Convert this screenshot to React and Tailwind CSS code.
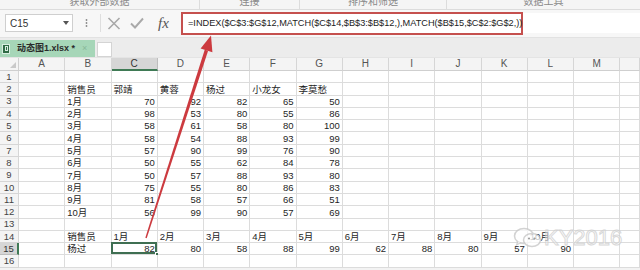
import React from "react";

const COLS = ["A","B","C","D","E","F","G","H","I","J","K","L","M",""];

const DATA = {
  2: ["", "销售员", "郭靖", "黄蓉", "杨过", "小龙女", "李莫愁"],
  3: ["", "1月", 70, 92, 82, 65, 50],
  4: ["", "2月", 98, 53, 80, 55, 86],
  5: ["", "3月", 58, 61, 58, 80, 100],
  6: ["", "4月", 58, 54, 88, 93, 99],
  7: ["", "5月", 57, 90, 99, 76, 90],
  8: ["", "6月", 50, 55, 62, 84, 78],
  9: ["", "7月", 50, 57, 88, 93, 80],
  10: ["", "8月", 75, 55, 80, 86, 83],
  11: ["", "9月", 81, 58, 57, 66, 51],
  12: ["", "10月", 56, 99, 90, 57, 69],
  14: ["", "销售员", "1月", "2月", "3月", "4月", "5月", "6月", "7月", "8月", "9月", "10月"],
  15: ["", "杨过", 82, 80, 58, 88, 99, 62, 88, 80, 57, 90],
};

const font = { fontFamily: '"Liberation Sans", "Noto Sans CJK SC", sans-serif' };

function Cell({ v, selected }) {
  const isNum = typeof v === "number";
  return (
    <div
      className={`relative h-[12.3px] border-r border-b border-[#dcdcdc] bg-white flex items-end overflow-visible whitespace-nowrap px-[2px] text-[9.5px] leading-[11px] text-[#1e1e1e] ${isNum ? "justify-end" : "justify-start"}`}
    >
      {v !== undefined && v !== "" ? <span>{v}</span> : null}
      {selected ? (
        <>
          <div className="absolute -left-[1px] -top-[1px] -right-[0px] -bottom-[0px] border-2 border-[#3f6f52]" />
          <div className="absolute -right-[2px] -bottom-[2px] w-[4px] h-[4px] bg-[#3f6f52] border border-white" />
        </>
      ) : null}
    </div>
  );
}

export default function App() {
  const rowNums = Array.from({ length: 16 }, (_, i) => i + 1);
  return (
    <div className="relative w-[640px] h-[270px] overflow-hidden bg-[#f3f3f3]" style={font}>
      {/* ribbon group labels */}
      <div className="h-[10px] flex border-b border-[#dcdcdc] bg-[#f5f5f5] overflow-hidden text-[10px] text-[#8a8a8a]">
        <div className="w-[200px] flex justify-center border-r border-[#dcdcdc]"><span className="-mt-[6px]">获取外部数据</span></div>
        <div className="w-[100px] flex justify-center border-r border-[#dcdcdc]"><span className="-mt-[6px]">连接</span></div>
        <div className="w-[147px] flex justify-center border-r border-[#dcdcdc]"><span className="-mt-[6px]">排序和筛选</span></div>
        <div className="flex-1 flex justify-center"><span className="-mt-[6px]">数据工具</span></div>
      </div>

      {/* formula bar */}
      <div className="h-[28px] flex items-start bg-[#f7f7f7] border-b border-[#e2e2e2]">
        <div className="ml-[5px] mt-[4px] w-[68px] h-[18px] bg-white border border-[#cfcfcf] flex items-center justify-between pl-[4px] pr-[3px]">
          <span className="text-[10px] text-[#333]">C15</span>
          <svg width="6" height="4" viewBox="0 0 6 4"><path d="M0 0 L6 0 L3 4 Z" fill="#555" /></svg>
        </div>
        <div className="w-[27px] h-[26px] flex items-center justify-center text-[#777]">
          <svg width="3" height="10" viewBox="0 0 3 10"><circle cx="1.5" cy="2" r="0.9" fill="#888"/><circle cx="1.5" cy="5" r="0.9" fill="#888"/><circle cx="1.5" cy="8" r="0.9" fill="#888"/></svg>
        </div>
        <div className="mt-[4px] w-[76px] h-[18px] border-l border-[#dedede] flex items-center">
          <svg className="ml-[6px]" width="14" height="13" viewBox="0 0 14 13"><path d="M1.5 1 L12.5 12 M12.5 1 L1.5 12" stroke="#a9a9a9" strokeWidth="1.6" fill="none"/></svg>
          <svg className="ml-[9px]" width="14" height="12" viewBox="0 0 14 12"><path d="M1 6.5 L5 10.5 L13 1.5" stroke="#a9a9a9" strokeWidth="1.9" fill="none"/></svg>
          <span className="ml-[14px] text-[15px] italic text-[#555] leading-none" style={{ fontFamily: '"Liberation Serif", serif' }}>fx</span>
        </div>
        <div className="ml-[5px] mt-[2px] w-[342px] h-[23px] border-2 border-[#c5504e] bg-white flex items-center pl-[5px] text-[9.2px] text-[#222] whitespace-nowrap">
          =INDEX($C$3:$G$12,MATCH($C$14,$B$3:$B$12,),MATCH($B$15,$C$2:$G$2,))
        </div>
        <div className="flex-1 mt-[3px] h-[20px] bg-white" />
      </div>

      {/* workbook tab row */}
      <div className="h-[19px] flex items-end bg-[#ececec]">
        <div className="w-[95px] h-[17px] bg-[#a6d6b8] flex items-center pl-[2px] whitespace-nowrap">
          <div className="shrink-0 w-[8px] h-[10px] bg-[#2f6b45] border border-[#d8eee0] flex items-center justify-center">
            <div className="w-[3px] h-[5px] border border-[#d8eee0]" />
          </div>
          <span className="ml-[7px] text-[9px] font-bold text-[#2a2a2a]">动态图1.xlsx *</span>
          <span className="ml-[7px] text-[9px] text-[#88b898]">×</span>
        </div>
        <div className="ml-[2px] w-[15px] h-[15px] bg-white border border-[#d4d4d4]" />
      </div>

      <div className="h-[1px] bg-[#e4e4e4]" />

      {/* grid */}
      <div className="grid grid-cols-[19px_repeat(13,46.25px)_20px]">
        {/* header */}
        <div className="h-[13px] border-r border-b border-[#cfcfcf] bg-[#f4f4f4] relative">
          <svg className="absolute right-[2px] bottom-[2px]" width="6" height="6" viewBox="0 0 6 6"><path d="M6 0 L6 6 L0 6 Z" fill="#c9c9c9"/></svg>
        </div>
        {COLS.map((c, i) => (
          <div
            key={"h" + i}
            className={`h-[13px] border-r flex items-center justify-center text-[10px] leading-none ${c === "C" ? "bg-[#d6d6d6] border-[#bdbdbd] border-b-2 border-b-[#3f7a55] text-[#333]" : "bg-[#f4f4f4] border-[#d6d6d6] border-b border-b-[#cfcfcf] text-[#555]"}`}
          >
            {c}
          </div>
        ))}
        {rowNums.map((r) => {
          const d = DATA[r] || [];
          return (
            <React.Fragment key={r}>
              <div
                className={`h-[12.3px] flex items-center justify-center text-[9.5px] leading-none border-b ${r === 15 ? "bg-[#d6d6d6] border-r-2 border-r-[#3f7a55] border-b-[#bdbdbd] text-[#333]" : "bg-[#f4f4f4] border-r border-[#d6d6d6] text-[#444]"}`}
              >
                {r}
              </div>
              {COLS.map((c, ci) => (
                <Cell key={c + ci} v={d[ci]} selected={r === 15 && ci === 2} />
              ))}
            </React.Fragment>
          );
        })}
      </div>

      {/* watermark */}
      <div className="absolute left-[513px] top-[226px] flex items-center opacity-80">
        <svg width="30" height="24" viewBox="0 0 30 24">
          <ellipse cx="11" cy="10" rx="9.5" ry="7.5" fill="rgba(255,255,255,0.85)" stroke="#c9c9c9" strokeWidth="1.5" />
          <ellipse cx="19" cy="14" rx="8.5" ry="6.5" fill="rgba(255,255,255,0.9)" stroke="#c9c9c9" strokeWidth="1.5" />
          <circle cx="16" cy="12.5" r="1.1" fill="#888" />
          <circle cx="21.5" cy="12.5" r="1.1" fill="#888" />
          <path d="M5 15 L3.5 19 L8 16.5" fill="rgba(255,255,255,0.85)" stroke="#c9c9c9" strokeWidth="1.2" />
        </svg>
        <span
          className="ml-[1px] text-[22px] leading-none text-[rgba(255,255,255,0.6)] [-webkit-text-stroke:1px_#cfcfcf]"
          style={{ fontFamily: '"Liberation Sans", sans-serif' }}
        >
          KY2016
        </span>
      </div>

      {/* red arrow */}
      <svg className="absolute left-0 top-0 pointer-events-none" width="640" height="270" viewBox="0 0 640 270">
        <polygon
          points="145.3,237.8 146.7,238.2 208.1,50.8 204.7,49.8"
          fill="#cc3a3f"
        />
        <polygon points="211,35.5 212.4,52.2 200.6,48.6" fill="#cc3a3f" />
      </svg>
    </div>
  );
}
